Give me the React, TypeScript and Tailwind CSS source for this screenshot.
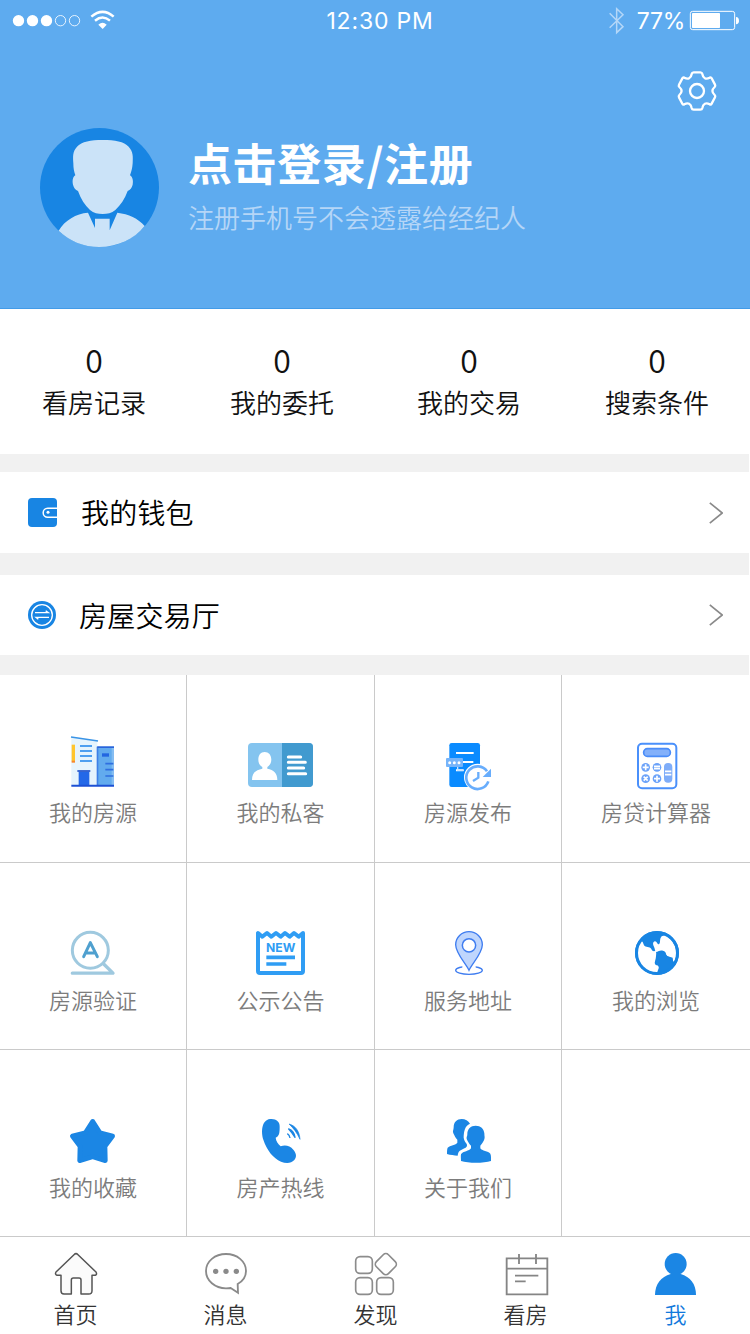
import type { ReactNode } from 'react';

// --- Interfaces ---
interface GridItem {
  label: string;
  viewBox: string;
  icon: ReactNode;
}

interface TabItem {
  label: string;
  viewBox: string;
  icon: ReactNode;
  active?: boolean;
}

const stats = [
  { label: '看房记录', value: 0 },
  { label: '我的委托', value: 0 },
  { label: '我的交易', value: 0 },
  { label: '搜索条件', value: 0 },
];

// --- Grid icons (3 units = 1px) ---
const BuildingIcon = (
  <>
    <path d="M214 52 L292 64 V196 H214Z" fill="#e6f4fd" />
    <path d="M213 51 L294 63" stroke="#3a94e6" strokeWidth="5" />
    <rect x="292" y="80" width="50" height="116" fill="#62abee" />
    <rect x="290" y="80" width="5" height="116" fill="#3d80e8" />
    <rect x="335" y="84" width="7" height="112" fill="#85bdf2" />
    <rect x="292" y="79" width="50" height="5" fill="#2a64dc" />
    <rect x="215" y="74" width="10" height="50" fill="#ffc52e" />
    <rect x="215" y="122" width="10" height="6" fill="#f7872d" />
    <path d="M240 78H276M240 93H276M240 108H276M240 123H276" stroke="#4e9ff0" strokeWidth="6" />
    <rect x="306" y="100" width="21" height="10" fill="#2366e0" />
    <path d="M316 131H340M316 149H340M316 168H340" stroke="#2f6fe0" strokeWidth="5" />
    <rect x="236" y="155" width="32" height="40" fill="#2468e8" />
    <path d="M232 153H271" stroke="#1f50c8" strokeWidth="5" />
    <path d="M214 197H342" stroke="#1c50d4" strokeWidth="6" />
  </>
);

const CardIcon = (
  <>
    <rect x="744" y="69" width="195" height="132" rx="12" fill="#84c4ef" />
    <path d="M846 69H927a12 12 0 0 1 12 12V189a12 12 0 0 1-12 12H846Z" fill="#419acf" />
    <path d="M756 180c0-22 12-30 31-34v-5c-9-6-12-13-12-22 0-14 7-23 19-23s20 9 20 23c0 9-4 16-12 22v5c19 4 30 12 30 34Z" fill="#fff" />
    <path d="M865 111H902M865 127H916M865 144H911M865 161H917" stroke="#fff" strokeWidth="9" strokeLinecap="round" />
  </>
);

const PublishIcon = (
  <>
    <rect x="223" y="69" width="92" height="132" rx="7" fill="#0a8bff" />
    <path d="M243 99H296M262 126H295M243 151H266" stroke="#fff" strokeWidth="6" />
    <path d="M248 135V151H266" stroke="#cfe5ff" strokeWidth="4" fill="none" />
    <rect x="213" y="114" width="51" height="27" rx="3" fill="#76b4fa" />
    <g fill="#fff">
      <circle cx="224" cy="128" r="4.500" />
      <circle cx="238" cy="128" r="4.500" />
      <circle cx="252" cy="128" r="4.500" />
    </g>
    <circle cx="308" cy="172" r="41" fill="#fff" />
    <path d="M336 154A34 34 0 1 0 340 184" stroke="#68adfc" strokeWidth="8" fill="none" />
    <path d="M348 146V171H323Z" fill="#68adfc" />
    <path d="M310 156V173L294 183" stroke="#68adfc" strokeWidth="7" fill="none" />
  </>
);

const CalculatorIcon = (
  <>
    <rect x="789" y="71" width="115" height="134" rx="12" fill="#fff" stroke="#4a90fb" strokeWidth="6" />
    <rect x="806" y="86" width="80" height="23" rx="11" fill="#83b0fa" stroke="#4a8cf8" strokeWidth="5" />
    <g fill="#6ba2f9">
      <circle cx="812" cy="142" r="13" />
      <circle cx="846" cy="142" r="13" />
      <circle cx="812" cy="176" r="13" />
      <circle cx="846" cy="176" r="13" />
    </g>
    <path
      d="M803 142H821M812 133V151M837 139H855M837 146H855M806 170L818 182M818 170L806 182M837 176H855M846 167V185"
      stroke="#fff"
      strokeWidth="5"
    />
    <rect x="867" y="129" width="25" height="59" rx="12" fill="#7fadf9" />
    <path d="M870 154H889M870 164H889" stroke="#fff" strokeWidth="5" />
  </>
);

const VerifyIcon = (
  <>
    <circle cx="271" cy="121" r="54" fill="none" stroke="#9fc9df" strokeWidth="9" />
    <path d="M311 162L339 189.500H217" stroke="#9fc9df" strokeWidth="10" fill="none" strokeLinecap="round" strokeLinejoin="round" />
    <path d="M251 140L271 98L292 140M259 129H284" stroke="#4fa0cf" strokeWidth="9" fill="none" strokeLinecap="round" strokeLinejoin="round" />
  </>
);

const NoticeIcon = (
  <>
    <path
      d="M774 69V183a6 6 0 0 0 6 6H903a6 6 0 0 0 6-6V69L896 80L882 69L869 80L855 69L842 80L828 69L814 80L801 69L787 80Z"
      fill="#fff"
      stroke="#2f9df4"
      strokeWidth="12"
      strokeLinejoin="round"
    />
    <text x="842" y="127" textAnchor="middle" textLength="88" lengthAdjust="spacingAndGlyphs" fontSize="36" fontWeight="700" fontFamily="Inter, sans-serif" fill="#2f9df4">
      NEW
    </text>
    <path d="M799 142H885M799 162H859" stroke="#2f9df4" strokeWidth="11" />
  </>
);

const PinIcon = (
  <>
    <ellipse cx="282" cy="181" rx="40" ry="12" fill="none" stroke="#3f7df0" strokeWidth="4" />
    <path d="M262 158h40v20h-40Z" fill="#fff" />
    <path d="M282 181C274 162 242 130 242 104a40 39 0 0 1 80 0C322 130 290 162 282 181Z" fill="#bfd6fd" stroke="#3f7df0" strokeWidth="4" />
    <circle cx="282" cy="106" r="20" fill="#fff" stroke="#3f7df0" strokeWidth="4.500" />
  </>
);

const GlobeIcon = (
  <>
    <circle cx="846" cy="129" r="66" fill="#1885e3" />
    <path
      d="M797 94C802 91 804 99 807 106C812 113 824 109 829 117C832 124 837 126 843 121C842 128 846 132 843 139C843 149 837 157 840 163C846 166 851 163 852 171C852 177 848 180 847 187A58 58 0 0 1 797 94Z"
      fill="#fff"
    />
    <path
      d="M860 79C868 75 874 75 880 82A58 58 0 0 1 903 140C899 154 897 160 893 151C891 143 881 142 876 137C869 131 875 125 864 122C854 119 848 126 844 126C839 122 840 116 837 110C833 103 833 96 840 94C846 95 846 103 852 103C858 98 852 88 860 79Z"
      fill="#fff"
    />
    <path d="M844 139C843 128 851 122 861 123C873 124 872 132 876 138L893 143L895 158L876 186L850 186C853 174 853 165 842 165Z" fill="#1885e3" />
    <circle cx="846" cy="129" r="61.500" fill="none" stroke="#1885e3" strokeWidth="9" />
  </>
);

const StarIcon = (
  <path
    d="M278 64L300 98L338 108L315 139L316 182L278 170L239 182L240 139L217 108L256 98Z"
    fill="#1b86e4"
    stroke="#1b86e4"
    strokeWidth="14"
    strokeLinejoin="round"
  />
);

const PhoneIcon = (
  <g fill="#1b86e4">
    <path d="M810 57C828 55 840 65 839 80C839 98 838 108 827 113C828 123 834 132 842 139C855 134 870 137 880 149C889 160 891 170 883 180C873 191 858 191 843 185C820 175 800 150 790 119C783 96 784 61 810 57Z" />
    <path d="M867 72C885 77 898 91 900 118C891 98 880 84 867 72Z" stroke="#1b86e4" strokeWidth="2" strokeLinejoin="round" />
    <path d="M866 87C877 91 883 99 885 112C878 101 873 94 866 87Z" stroke="#1b86e4" strokeWidth="4" strokeLinejoin="round" />
    <path d="M862 101C867 104 869 108 870 114" stroke="#1b86e4" strokeWidth="4" fill="none" />
  </g>
);

const UsersIcon = (
  <g fill="#1b86e4">
    <path d="M260 57C246 57 236 66 236 82C236 90 232 93 235 100C239 106 241 115 247 119V128C243 135 225 136 218 143C216 148 216 155 216 162C226 165 238 166 248 167C249 158 251 152 260 149C267 144 277 144 276 134C274 128 267 124 266 113C266 98 269 76 285 71C280 62 271 57 260 57Z" />
    <path d="M302 77C287 77 277 87 277 102C277 110 273 111 276 119C280 126 283 132 288 137V145C283 154 264 153 258 163C257 169 258 177 258 183C280 190 326 190 348 183C348 176 349 168 346 161C340 153 320 153 316 145V137C322 131 325 125 328 118C330 111 328 109 328 100C327 86 317 77 302 77Z" />
  </g>
);

const gridItems: GridItem[] = [
  { label: '我的房源', viewBox: '0 36 558 180', icon: BuildingIcon },
  { label: '我的私客', viewBox: '561 36 561 180', icon: CardIcon },
  { label: '房源发布', viewBox: '0 36 558 180', icon: PublishIcon },
  { label: '房贷计算器', viewBox: '561 36 564 180', icon: CalculatorIcon },
  { label: '房源验证', viewBox: '0 30 558 180', icon: VerifyIcon },
  { label: '公示公告', viewBox: '561 30 561 180', icon: NoticeIcon },
  { label: '服务地址', viewBox: '0 30 558 180', icon: PinIcon },
  { label: '我的浏览', viewBox: '561 30 564 180', icon: GlobeIcon },
  { label: '我的收藏', viewBox: '0 21 558 180', icon: StarIcon },
  { label: '房产热线', viewBox: '561 21 561 180', icon: PhoneIcon },
  { label: '关于我们', viewBox: '0 21 558 180', icon: UsersIcon },
];

// --- Tab bar ---
const tabs: TabItem[] = [
  {
    label: '首页',
    viewBox: '0 435 450 165',
    icon: (
      <path
        d="M222 464Q228 458 234 464L288 516Q292 523 286 526H276V572Q276 582 266 582H243V540Q243 534 237 534H220Q214 534 214 540V582H192Q183 582 183 572V526H171Q164 523 168 516Z"
        fill="#fbfbfb"
        stroke="#555"
        strokeWidth="4.500"
        strokeLinejoin="round"
      />
    ),
  },
  {
    label: '消息',
    viewBox: '450 435 450 165',
    icon: (
      <>
        <path d="M713 552C729 543 738 530 738 513C738 484 711 462 678 462S618 484 618 513S645 565 678 565C683 565 688 565 692 564L714 578Z" fill="none" stroke="#8a8a8a" strokeWidth="5.500" />
        <g fill="#8a8a8a">
          <circle cx="647" cy="514" r="8" />
          <circle cx="678" cy="514" r="8" />
          <circle cx="709" cy="514" r="8" />
        </g>
      </>
    ),
  },
  {
    label: '发现',
    viewBox: '900 435 450 165',
    icon: (
      <g fill="none" stroke="#8c8c8c" strokeWidth="5">
        <rect x="1067" y="470" width="50" height="50" rx="13" />
        <rect x="1067" y="533" width="50" height="50" rx="13" />
        <rect x="1130" y="533" width="50" height="50" rx="13" />
        <rect x="1132" y="467" width="51" height="51" rx="11" transform="rotate(45 1157.500 492.500)" />
      </g>
    ),
  },
  {
    label: '看房',
    viewBox: '225 435 450 165',
    icon: (
      <path d="M395 475H517V583H395ZM395 506H517M432 462V492M483 462V492M420 527H490M420 544H452" fill="none" stroke="#858585" strokeWidth="5.500" />
    ),
  },
  {
    label: '我',
    viewBox: '675 435 450 165',
    active: true,
    icon: (
      <g fill="#1b86e4">
        <circle cx="902" cy="492" r="33" />
        <path d="M840 585C840 553 858 530 887 522H917C946 530 963 553 963 585Z" />
      </g>
    ),
  },
];

function StatusBar() {
  return (
    <div className="flex h-10 items-center font-['Inter'] text-[23px] leading-10 text-white">
      <svg className="h-10 w-[300px]" viewBox="0 0 900 120">
        <g fill="#fff">
          <circle cx="55.500" cy="62" r="17" />
          <circle cx="97.500" cy="62" r="17" />
          <circle cx="139.500" cy="62" r="17" />
        </g>
        <g fill="none" stroke="#fff" strokeWidth="2.500">
          <circle cx="181.500" cy="62" r="15.500" />
          <circle cx="223.500" cy="62" r="15.500" />
        </g>
        <path d="M274 50Q308 21 341 50M285 62Q308 43 330 62" fill="none" stroke="#fff" strokeWidth="7.500" />
        <path d="M295 74Q308 63 320 74L308 87Z" fill="#fff" />
      </svg>
      <div className="w-40 pt-0.5 text-center tracking-[0.8px]">12:30 PM</div>
      <div className="flex flex-1 items-center justify-end">
        <svg className="h-10 w-8" viewBox="672 0 96 120">
          <path d="M701 40L741 80L722 98V26L741 44L701 83" fill="none" stroke="#b4d7f8" strokeWidth="4.500" />
        </svg>
        <div className="w-[53px] pt-0.5 text-right tracking-[-0.3px]">77%</div>
        <svg className="ml-px h-10 w-16" viewBox="933 0 192 120">
          <rect x="946" y="34" width="133" height="55" rx="7" fill="none" stroke="#fff" strokeWidth="3" />
          <rect x="951" y="39" width="84" height="45" rx="2" fill="#fff" />
          <path d="M1083 51Q1092 52 1092 62T1083 73Z" fill="#fff" />
        </svg>
      </div>
    </div>
  );
}

function ProfileHeader() {
  return (
    <header className="h-[309px] border-b border-[#429be8] bg-[#5eabef]">
      <StatusBar />
      <div className="flex h-[88px] justify-end pt-[30px] pr-8">
        <svg className="h-[42px] w-[42px]" viewBox="-63 -63 126 126" fill="none" stroke="#fff" strokeWidth="7" strokeLinejoin="round">
          <path d="M-10 -56H10Q15 -56 16 -51C18 -38 27 -34 38 -40Q42 -42 44 -38L54 -19Q56 -15 53 -12C44 -4 44 4 53 12Q56 15 54 19L44 38Q42 42 38 40C27 34 18 38 16 51Q15 56 10 56H-10Q-15 56 -16 51C-18 38 -27 34 -38 40Q-42 42 -44 38L-54 19Q-56 15 -53 12C-44 4 -44 -4 -53 -12Q-56 -15 -54 -19L-44 -38Q-42 -42 -38 -40C-27 -34 -18 -38 -16 -51Q-15 -56 -10 -56Z" />
          <circle r="21" />
        </svg>
      </div>
      <div className="flex pl-10">
        <svg className="h-[119px] w-[119px]" viewBox="120 384 357 357">
          <circle cx="298.500" cy="562.500" r="178.500" fill="#1885e3" />
          <path
            d="M308 420C345 420 372 425 386 440C400 455 399 470 398 490C397 505 394 515 390 526C399 532 400 544 398 554C395 565 391 569 383 573C374 597 362 615 346 630C335 639 322 642 308 642C294 642 281 639 270 630C254 615 243 597 234 573C226 569 222 565 219 554C217 544 217 532 226 526C222 515 220 505 220 490C219 470 217 455 231 440C245 425 272 420 308 420Z"
            fill="#cbe3f8"
          />
          <path d="M176 692C195 660 228 641 264 638L285 684V656H329V691L352 638C386 642 414 655 434 678C402 718 352 741 298 741C250 741 207 722 176 692Z" fill="#cbe3f8" />
        </svg>
        <div className="pt-0.5 pl-[29px]">
          <h1 className="text-[44px] leading-[64px] font-bold tracking-[0.6px] text-white">点击登录/注册</h1>
          <p className="pt-px text-[26px] leading-[44px] font-[350] text-[#b5d6f7]">注册手机号不会透露给经纪人</p>
        </div>
      </div>
    </header>
  );
}

function MenuRow({ icon, label, className }: { icon: ReactNode; label: string; className: string }) {
  return (
    <div className={`flex w-full items-center bg-white pr-[26px] pl-7 ${className}`}>
      {icon}
      <span className="flex-1 pb-px text-[28px] font-[350] tracking-[0.2px] text-black">{label}</span>
      <svg className="h-[22px] w-[15px]" viewBox="0 0 15 22" fill="none" stroke="#8a8a8a" strokeWidth="1.700">
        <path d="M1.800 0.800L14.300 11L1.800 21.200" />
      </svg>
    </div>
  );
}

export default function App() {
  return (
    <div className="flex h-[1334px] w-[750px] flex-col overflow-hidden bg-white font-['Noto_Sans_CJK_SC',sans-serif]">
      <ProfileHeader />

      <section className="grid h-[145px] grid-cols-[188px_188px_186px_190px] content-start pt-[29px]">
        {stats.map((s) => (
          <div key={s.label} className="flex flex-col items-center font-[350] text-[#111]">
            <span className="text-[32px] leading-[42px]">{s.value}</span>
            <span className="pt-px text-[26px] leading-[42px]">{s.label}</span>
          </div>
        ))}
      </section>

      <section className="flex h-[221px] w-[749px] flex-col bg-[#f1f1f1] pt-[18px]">
        <MenuRow
          label="我的钱包"
          className="mb-[22px] h-[81px]"
          icon={
            <svg className="mr-6 h-[29px] w-[29px]" viewBox="84 534 87 87">
              <rect x="84" y="534" width="87" height="87" rx="12" fill="#1885e3" />
              <path d="M171 565H143a13.500 13.500 0 0 0 0 27H171" fill="none" stroke="#fff" strokeWidth="4.500" />
              <circle cx="144" cy="577" r="4.500" fill="#fff" />
            </svg>
          }
        />
        <MenuRow
          label="房屋交易厅"
          className="h-20"
          icon={
            <svg className="mr-[23px] h-7 w-7" viewBox="84 843 84 84">
              <circle cx="126" cy="885" r="42" fill="#1885e3" />
              <circle cx="126" cy="885" r="31" fill="none" stroke="#fff" strokeWidth="4" />
              <path d="M105 878H145L137 872M147 892H108L115 898" fill="none" stroke="#fff" strokeWidth="4" />
            </svg>
          }
        />
      </section>

      <section className="grid grid-cols-[187px_188px_187px_188px] grid-rows-[188px_187px_187px]">
        {gridItems.map((item) => (
          <div
            key={item.label}
            className="flex flex-col items-center border-r border-b border-[#cacaca] pt-[57px] nth-[4n]:border-r-0"
          >
            <svg className="h-[60px] w-full" viewBox={item.viewBox}>
              {item.icon}
            </svg>
            <span className="mt-[3px] text-[22px] leading-8 font-[350] text-[#7c7c7c]">{item.label}</span>
          </div>
        ))}
        <div className="border-b border-[#cacaca]" />
      </section>

      <nav className="flex h-[97px] pt-2">
        {tabs.map((tab) => (
          <div key={tab.label} className="flex w-[150px] flex-col items-center">
            <svg className="h-[55px] w-full" viewBox={tab.viewBox}>
              {tab.icon}
            </svg>
            <span className={`-mt-px pl-px text-[22px] leading-7 font-[350] ${tab.active ? 'text-[#1279dc]' : 'text-[#333]'}`}>{tab.label}</span>
          </div>
        ))}
      </nav>
    </div>
  );
}
